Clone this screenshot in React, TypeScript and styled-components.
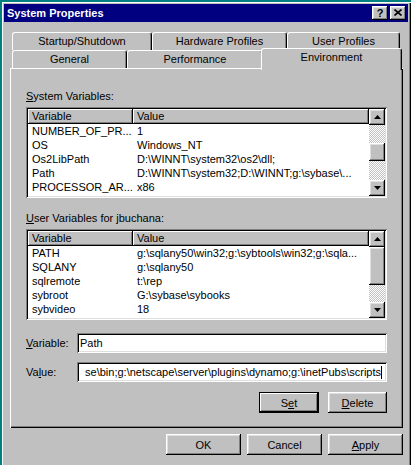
import styled, { createGlobalStyle } from "styled-components";

const GlobalStyle = createGlobalStyle`
  html, body { margin: 0; padding: 0; }
  body {
    background: #008080;
    font-family: "Liberation Sans", Arial, sans-serif;
    font-size: 11px;
    color: #000;
    overflow: hidden;
  }
`;

const raised = `box-shadow: inset -1px -1px #000, inset 1px 1px #fff, inset -2px -2px #808080, inset 2px 2px #dfdfdf;`;
const sunken = `box-shadow: inset 1px 1px #808080, inset -1px -1px #fff, inset 2px 2px #000, inset -2px -2px #dfdfdf;`;

const Window = styled.div`
  width: 409px;
  height: 470px;
  margin: 2px 0 0 2px;
  box-sizing: border-box;
  padding: 2px 3px 0 2px;
  background: #c0c0c0;
  box-shadow: inset 1px 1px #fff, inset -1px -1px #000, inset -2px -2px #808080;
`;

const TitleBar = styled.div`
  height: 18px;
  background: #000080;
  display: flex;
  align-items: center;
  padding: 0 2px 0 3px;
`;

const TitleText = styled.div`
  flex: 1;
  color: #fff;
  font-weight: bold;
  font-size: 11px;
`;

const TitleButtons = styled.div`
  display: flex;
  gap: 2px;
`;

const TitleButton = styled.div`
  width: 16px;
  height: 14px;
  box-sizing: border-box;
  background: #c0c0c0;
  ${raised}
  display: flex;
  align-items: center;
  justify-content: center;
  font-weight: bold;
  font-size: 11px;
  line-height: 14px;
  padding-bottom: 1px;
`;

const Client = styled.div`
  padding: 10px 5px 0 6px;
`;

const TabStrip = styled.div`
  padding-left: 2px;
`;

const TabRow = styled.div`
  display: flex;
  align-items: flex-start;
  height: 18px;
`;

const Tab = styled.div<{ $w: number; $active?: boolean }>`
  width: ${(p) => p.$w}px;
  height: ${(p) => (p.$active ? 22 : 18)}px;
  margin: ${(p) => (p.$active ? "-2px -2px 0 -2px" : "0")};
  box-sizing: border-box;
  position: relative;
  z-index: ${(p) => (p.$active ? 1 : 0)};
  background: #c0c0c0;
  border-top: 1px solid #fff;
  border-left: 1px solid #fff;
  border-right: 1px solid #000;
  border-radius: 3px 3px 0 0;
  box-shadow: inset -1px 0 #808080;
  text-align: center;
  line-height: 17px;
  white-space: nowrap;
`;

const Panel = styled.div`
  height: 360px;
  box-sizing: border-box;
  padding: 22px 16px 0 16px;
  box-shadow: inset 1px 1px #fff, inset -1px -1px #000, inset -2px -2px #808080;
  display: flex;
  flex-direction: column;
`;

const GroupLabel = styled.div<{ $gap: number }>`
  line-height: 13px;
  height: 13px;
  margin-top: ${(p) => p.$gap}px;
  white-space: nowrap;
`;

const ListBox = styled.div`
  margin-top: 4px;
  height: 91px;
  box-sizing: border-box;
  padding: 2px;
  background: #fff;
  ${sunken}
  display: flex;
`;

const Table = styled.div`
  flex: 1;
  min-width: 0;
  overflow: hidden;
`;

const HeaderRow = styled.div`
  display: flex;
  height: 15px;
`;

const HeaderCell = styled.div<{ $w?: number }>`
  ${(p) => (p.$w ? `width: ${p.$w}px;` : "flex: 1;")}
  box-sizing: border-box;
  background: #c0c0c0;
  box-shadow: inset -1px -1px #000, inset 1px 1px #fff, inset -2px -2px #808080;
  padding-left: 4px;
  line-height: 15px;
  white-space: nowrap;
`;

const Row = styled.div`
  display: flex;
  height: 14px;
  line-height: 14px;
`;

const Cell = styled.div<{ $w?: number }>`
  ${(p) => (p.$w ? `width: ${p.$w}px;` : "flex: 1;")}
  box-sizing: border-box;
  padding-left: 4px;
  white-space: nowrap;
  overflow: hidden;
`;

const ScrollBar = styled.div`
  width: 16px;
  display: flex;
  flex-direction: column;
`;

const ScrollButton = styled.div`
  width: 16px;
  height: 16px;
  box-sizing: border-box;
  background: #c0c0c0;
  ${raised}
  display: flex;
  align-items: center;
  justify-content: center;
`;

const Track = styled.div`
  flex: 1;
  background-color: #fff;
  background-image: repeating-conic-gradient(#c0c0c0 0 25%, #fff 0 50%);
  background-size: 2px 2px;
`;

const Thumb = styled.div<{ $top: number; $h: number }>`
  margin-top: ${(p) => p.$top}px;
  height: ${(p) => p.$h}px;
  background: #c0c0c0;
  ${raised}
`;

const FieldRow = styled.div<{ $gap: number }>`
  display: flex;
  align-items: center;
  margin-top: ${(p) => p.$gap}px;
  height: 20px;
`;

const FieldLabel = styled.div`
  width: 51px;
  white-space: nowrap;
`;

const Input = styled.div<{ $end?: boolean }>`
  flex: 1;
  min-width: 0;
  height: 20px;
  box-sizing: border-box;
  background: #fff;
  ${sunken}
  padding: 0 5px 0 3px;
  display: flex;
  align-items: center;
  justify-content: ${(p) => (p.$end ? "flex-end" : "flex-start")};
  overflow: hidden;
  white-space: nowrap;
`;

const Caret = styled.span`
  display: inline-block;
  width: 1px;
  height: 13px;
  background: #000;
  flex: none;
`;

const ButtonRow = styled.div<{ $gap: number; $space: number }>`
  display: flex;
  justify-content: flex-end;
  gap: ${(p) => p.$space}px;
  margin-top: ${(p) => p.$gap}px;
`;

const Button = styled.div<{ $w: number; $default?: boolean }>`
  width: ${(p) => p.$w}px;
  height: 21px;
  box-sizing: border-box;
  background: #c0c0c0;
  ${(p) =>
    p.$default
      ? "box-shadow: inset 0 0 0 1px #000, inset -2px -2px #000, inset 2px 2px #fff, inset -3px -3px #808080;"
      : raised}
  display: flex;
  align-items: center;
  justify-content: center;
  white-space: nowrap;
`;

const Arrow = ({ up }: { up?: boolean }) => (
  <svg width="7" height="4" viewBox="0 0 7 4">
    <polygon points={up ? "3.5,0 7,4 0,4" : "0,0 7,0 3.5,4"} fill="#000" />
  </svg>
);

const CloseGlyph = () => (
  <svg width="8" height="7" viewBox="0 0 8 7">
    <path d="M0.5 0.5 L7.5 6.5 M7.5 0.5 L0.5 6.5" stroke="#000" strokeWidth="1.6" />
  </svg>
);

type Pair = [string, string];

const systemVars: Pair[] = [
  ["NUMBER_OF_PR...", "1"],
  ["OS", "Windows_NT"],
  ["Os2LibPath", "D:\\WINNT\\system32\\os2\\dll;"],
  ["Path", "D:\\WINNT\\system32;D:\\WINNT;g:\\sybase\\..."],
  ["PROCESSOR_AR...", "x86"],
];

const userVars: Pair[] = [
  ["PATH", "g:\\sqlany50\\win32;g:\\sybtools\\win32;g:\\sqla..."],
  ["SQLANY", "g:\\sqlany50"],
  ["sqlremote", "t:\\rep"],
  ["sybroot", "G:\\sybase\\sybooks"],
  ["sybvideo", "18"],
];

function VarList({ rows, thumbTop, thumbH }: { rows: Pair[]; thumbTop: number; thumbH: number }) {
  return (
    <ListBox>
      <Table>
        <HeaderRow>
          <HeaderCell $w={105}>Variable</HeaderCell>
          <HeaderCell>Value</HeaderCell>
        </HeaderRow>
        {rows.map(([k, v]) => (
          <Row key={k}>
            <Cell $w={105}>{k}</Cell>
            <Cell>{v}</Cell>
          </Row>
        ))}
      </Table>
      <ScrollBar>
        <ScrollButton><Arrow up /></ScrollButton>
        <Track>
          <Thumb $top={thumbTop} $h={thumbH} />
        </Track>
        <ScrollButton><Arrow /></ScrollButton>
      </ScrollBar>
    </ListBox>
  );
}

export default function App() {
  return (
    <>
      <GlobalStyle />
      <Window>
        <TitleBar>
          <TitleText>System Properties</TitleText>
          <TitleButtons>
            <TitleButton>?</TitleButton>
            <TitleButton><CloseGlyph /></TitleButton>
          </TitleButtons>
        </TitleBar>
        <Client>
          <TabStrip>
            <TabRow>
              <Tab $w={140}>Startup/Shutdown</Tab>
              <Tab $w={135}>Hardware Profiles</Tab>
              <Tab $w={113}>User Profiles</Tab>
            </TabRow>
            <TabRow>
              <Tab $w={115}>General</Tab>
              <Tab $w={136}>Performance</Tab>
              <Tab $w={141} $active>Environment</Tab>
            </TabRow>
          </TabStrip>
          <Panel>
            <GroupLabel $gap={0}><u>S</u>ystem Variables:</GroupLabel>
            <VarList rows={systemVars} thumbTop={18} thumbH={18} />
            <GroupLabel $gap={14}><u>U</u>ser Variables for jbuchana:</GroupLabel>
            <VarList rows={userVars} thumbTop={0} thumbH={38} />
            <FieldRow $gap={13}>
              <FieldLabel><u>V</u>ariable:</FieldLabel>
              <Input>Path</Input>
            </FieldRow>
            <FieldRow $gap={9}>
              <FieldLabel>Va<u>l</u>ue:</FieldLabel>
              <Input $end>
                se\bin;g:\netscape\server\plugins\dynamo;g:\inetPubs\scripts
                <Caret />
              </Input>
            </FieldRow>
            <ButtonRow $gap={10} $space={9}>
              <Button $w={60} $default>S<u>e</u>t</Button>
              <Button $w={59}><u>D</u>elete</Button>
            </ButtonRow>
          </Panel>
          <ButtonRow $gap={6} $space={6}>
            <Button $w={75}>OK</Button>
            <Button $w={75}>Cancel</Button>
            <Button $w={75}><u>A</u>pply</Button>
          </ButtonRow>
        </Client>
      </Window>
    </>
  );
}
